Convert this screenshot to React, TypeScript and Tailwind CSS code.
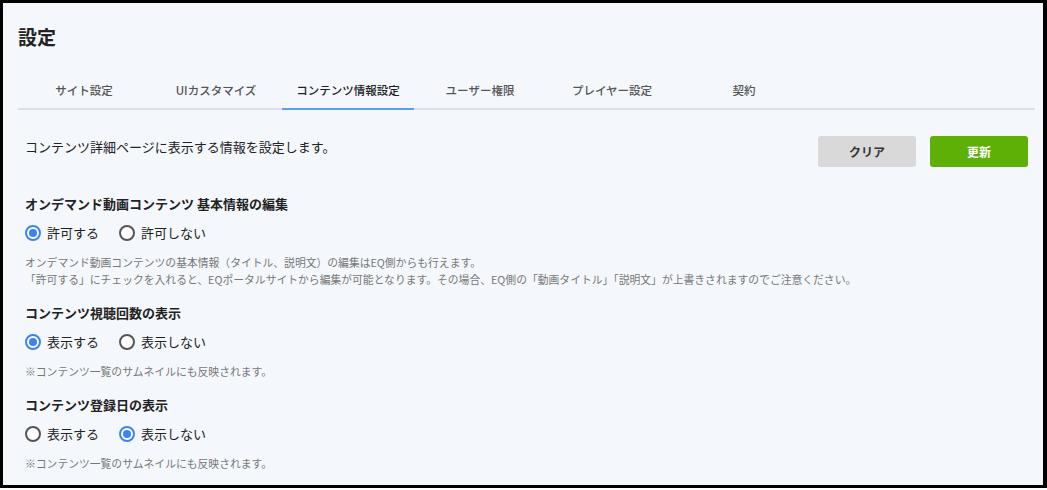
import { useState } from 'react'

const TABS = ['サイト設定', 'UIカスタマイズ', 'コンテンツ情報設定', 'ユーザー権限', 'プレイヤー設定', '契約']

const SECTIONS = [
  {
    title: 'オンデマンド動画コンテンツ 基本情報の編集',
    options: ['許可する', '許可しない'],
    initial: 0,
    notes: [
      'オンデマンド動画コンテンツの基本情報（タイトル、説明文）の編集はEQ側からも行えます。',
      '「許可する」にチェックを入れると、EQポータルサイトから編集が可能となります。その場合、EQ側の「動画タイトル」「説明文」が上書きされますのでご注意ください。',
    ],
  },
  {
    title: 'コンテンツ視聴回数の表示',
    options: ['表示する', '表示しない'],
    initial: 0,
    notes: ['※コンテンツ一覧のサムネイルにも反映されます。'],
  },
  {
    title: 'コンテンツ登録日の表示',
    options: ['表示する', '表示しない'],
    initial: 1,
    notes: ['※コンテンツ一覧のサムネイルにも反映されます。'],
  },
]

function Radio({ checked, label, onClick }: { checked: boolean; label: string; onClick: () => void }) {
  return (
    <button onClick={onClick} className="flex items-center gap-[6px] text-[13px] leading-[20px] text-[#222]">
      <span
        className={`w-4 h-4 rounded-full border-2 flex items-center justify-center bg-white ${checked ? 'border-[#3b82f6]' : 'border-[#555]'}`}
      >
        {checked && <span className="w-2 h-2 rounded-full bg-[#3b82f6]" />}
      </span>
      {label}
    </button>
  )
}

function Section({ title, options, initial, notes }: (typeof SECTIONS)[number]) {
  const [value, setValue] = useState(initial)
  return (
    <div className="flex flex-col">
      <h2 className="text-[13px] font-bold text-[#222] leading-[20px]">{title}</h2>
      <div className="flex items-center gap-[20px] mt-[9px]">
        {options.map((opt, i) => (
          <Radio key={opt} label={opt} checked={value === i} onClick={() => setValue(i)} />
        ))}
      </div>
      <div className="mt-[11px] text-[10.8px] leading-[17px] text-[#777]">
        {notes.map((n) => (
          <p key={n}>{n}</p>
        ))}
      </div>
    </div>
  )
}

export default function App() {
  const [active, setActive] = useState(2)

  return (
    <div
      className="w-[1047px] h-[488px] border-[3px] border-r-4 border-black bg-[#f4f7fc] overflow-hidden"
      style={{ fontFamily: '"Noto Sans CJK JP", "Noto Sans", sans-serif' }}
    >
      <div className="pl-[15px] pr-[8px] pt-[20px]">
        <h1 className="text-[19px] font-bold text-[#222] leading-[28px]">設定</h1>

        {/* Tabs */}
        <nav className="mt-[27px] flex border-b-2 border-[#dcdfe3]">
          {TABS.map((tab, i) => (
            <button
              key={tab}
              onClick={() => setActive(i)}
              className={`w-[132px] h-[32px] -mb-[2px] text-[11.5px] font-medium border-b-2 pb-[4px] ${active === i
                ? 'text-[#222] border-[#5b9cf5]'
                : 'text-[#555] border-transparent'
                }`}
            >
              {tab}
            </button>
          ))}
        </nav>

        <div className="pl-[7px] pr-[7px]">
          <div className="flex items-start justify-between mt-[26px]">
            <p className="text-[13px] leading-[20px] text-[#222] mt-[1px]">コンテンツ詳細ページに表示する情報を設定します。</p>
            <div className="flex gap-[14px]">
              <button className="w-[98px] h-[31px] rounded-[3px] bg-[#d9d9d9] text-[12px] font-bold text-[#333]">クリア</button>
              <button className="w-[98px] h-[31px] rounded-[3px] bg-[#5eb006] text-[12px] font-bold text-white">更新</button>
            </div>
          </div>

          <div className="mt-[27px] flex flex-col gap-[15px]">
            {SECTIONS.map((s) => (
              <Section key={s.title} {...s} />
            ))}
          </div>
        </div>
      </div>
    </div>
  )
}
